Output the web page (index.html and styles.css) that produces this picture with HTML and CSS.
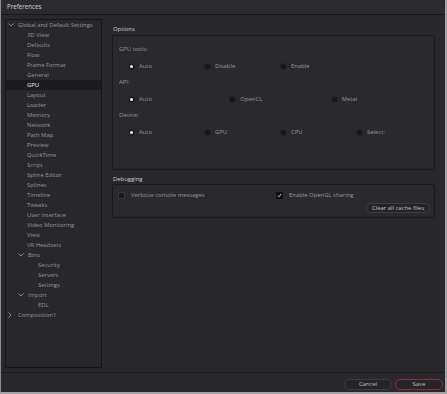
FILE: index.html
```html
<!DOCTYPE html>
<html lang="en">
<head>
    <meta charset="UTF-8">
    <title>Preferences</title>
    <link rel="stylesheet" href="styles.css">
</head>
<body>
    <div class="window">
        <div class="titlebar">Preferences</div>

        <div class="main">
            <div class="tree">
                <div class="item lvl0"><span class="arrow"><svg width="6" height="4" viewBox="0 0 6 4"><polyline points="0.5,0.5 3,3 5.5,0.5" /></svg></span>Global and Default Settings</div>
                <div class="item lvl1"><span class="arrow"></span>3D View</div>
                <div class="item lvl1"><span class="arrow"></span>Defaults</div>
                <div class="item lvl1"><span class="arrow"></span>Flow</div>
                <div class="item lvl1"><span class="arrow"></span>Frame Format</div>
                <div class="item lvl1"><span class="arrow"></span>General</div>
                <div class="item lvl1 selected"><span class="arrow"></span>GPU</div>
                <div class="item lvl1"><span class="arrow"></span>Layout</div>
                <div class="item lvl1"><span class="arrow"></span>Loader</div>
                <div class="item lvl1"><span class="arrow"></span>Memory</div>
                <div class="item lvl1"><span class="arrow"></span>Network</div>
                <div class="item lvl1"><span class="arrow"></span>Path Map</div>
                <div class="item lvl1"><span class="arrow"></span>Preview</div>
                <div class="item lvl1"><span class="arrow"></span>QuickTime</div>
                <div class="item lvl1"><span class="arrow"></span>Script</div>
                <div class="item lvl1"><span class="arrow"></span>Spline Editor</div>
                <div class="item lvl1"><span class="arrow"></span>Splines</div>
                <div class="item lvl1"><span class="arrow"></span>Timeline</div>
                <div class="item lvl1"><span class="arrow"></span>Tweaks</div>
                <div class="item lvl1"><span class="arrow"></span>User Interface</div>
                <div class="item lvl1"><span class="arrow"></span>Video Monitoring</div>
                <div class="item lvl1"><span class="arrow"></span>View</div>
                <div class="item lvl1"><span class="arrow"></span>VR Headsets</div>
                <div class="item lvl0 sub"><span class="arrow"><svg width="6" height="4" viewBox="0 0 6 4"><polyline points="0.5,0.5 3,3 5.5,0.5" /></svg></span>Bins</div>
                <div class="item lvl2"><span class="arrow"></span>Security</div>
                <div class="item lvl2"><span class="arrow"></span>Servers</div>
                <div class="item lvl2"><span class="arrow"></span>Settings</div>
                <div class="item lvl0 sub"><span class="arrow"><svg width="6" height="4" viewBox="0 0 6 4"><polyline points="0.5,0.5 3,3 5.5,0.5" /></svg></span>Import</div>
                <div class="item lvl2"><span class="arrow"></span>EDL</div>
                <div class="item lvl0"><span class="arrow"><svg width="4" height="6" viewBox="0 0 4 6"><polyline points="0.5,0.5 3,3 0.5,5.5" /></svg></span>Composition1</div>
            </div>

            <div class="content">
                <div class="section-title options-title">Options</div>
                <div class="box options">
                    <div class="group-label">GPU tools:</div>
                    <div class="radio-row cols4">
                        <label class="radio checked"><span class="dot"></span>Auto</label>
                        <label class="radio"><span class="dot"></span>Disable</label>
                        <label class="radio"><span class="dot"></span>Enable</label>
                    </div>
                    <div class="group-label">API:</div>
                    <div class="radio-row cols3">
                        <label class="radio checked"><span class="dot"></span>Auto</label>
                        <label class="radio"><span class="dot"></span>OpenCL</label>
                        <label class="radio"><span class="dot"></span>Metal</label>
                    </div>
                    <div class="group-label">Device:</div>
                    <div class="radio-row cols4">
                        <label class="radio checked"><span class="dot"></span>Auto</label>
                        <label class="radio"><span class="dot"></span>GPU</label>
                        <label class="radio"><span class="dot"></span>CPU</label>
                        <label class="radio"><span class="dot"></span>Select:</label>
                    </div>
                </div>

                <div class="section-title debug-title">Debugging</div>
                <div class="box debug">
                    <div class="check-row">
                        <label class="check"><span class="box-mark"></span>Verbose console messages</label>
                        <label class="check"><span class="box-mark on"><svg width="7" height="7" viewBox="0 0 7 7"><polyline points="1.3,3.8 2.8,5.3 5.8,1.3" /></svg></span>Enable OpenGL sharing</label>
                    </div>
                    <div class="button-row">
                        <button class="pill small">Clear all cache files</button>
                    </div>
                </div>
            </div>
        </div>

        <div class="footer">
            <button class="pill">Cancel</button>
            <button class="pill primary">Save</button>
        </div>
    </div>
</body>
</html>
```

FILE: styles.css
```css
* {
    margin: 0;
    padding: 0;
    box-sizing: border-box;
    font-family: "Open Sans", "Noto Sans", sans-serif;
}

body {
    background-color: #9a9a9c;
    width: 447px;
    height: 394px;
    overflow: hidden;
}

.window {
    width: 447px;
    height: 394px;
    background-color: #28282d;
    border-left: 1px solid #8e8e90;
    border-right: 2px solid #a4a4a6;
    border-bottom: 2px solid #a4a4a6;
    display: flex;
    flex-direction: column;
    font-size: 5.9px;
    color: #96969b;
}

.titlebar {
    height: 15px;
    line-height: 14px;
    padding-left: 6px;
    background-color: #2a2a2f;
    border-bottom: 1px solid #18181b;
    color: #d4d4d7;
    font-size: 6.2px;
}

.main {
    flex: 1;
    display: flex;
    gap: 10px;
    padding: 4px 10px 4px 4px;
}

.tree {
    width: 97px;
    background-color: #27272c;
    border: 1px solid #161619;
}

.item {
    height: 10px;
    line-height: 10px;
    display: flex;
    align-items: center;
    white-space: nowrap;
}

.item .arrow {
    width: 12px;
    height: 10px;
    display: flex;
    align-items: center;
    padding-left: 2px;
    flex-shrink: 0;
}

.arrow svg polyline {
    fill: none;
    stroke: #8e8e93;
    stroke-width: 0.9;
}

.lvl0 { padding-left: 0; }
.lvl0.sub { padding-left: 10px; }
.lvl1 { padding-left: 9px; }
.lvl2 { padding-left: 20px; }

.item.selected {
    background-color: #1c1c20;
    color: #f2f2f4;
}

.content {
    flex: 1;
    display: flex;
    flex-direction: column;
}

.section-title {
    line-height: 10px;
    color: #cfcfd3;
    padding-left: 1px;
}

.options-title {
    padding-top: 5px;
    padding-bottom: 1px;
}

.debug-title {
    padding-top: 4px;
}

.box {
    background-color: #29292e;
    border: 1px solid #1a1a1e;
    border-radius: 2px;
}

.options {
    height: 135px;
    padding: 8px 2px 0 6px;
}

.group-label {
    line-height: 10px;
    margin-bottom: 7px;
}

.radio-row {
    display: grid;
    line-height: 10px;
    margin-bottom: 6px;
    padding-left: 9px;
}

.cols4 { grid-template-columns: repeat(4, 1fr); }
.cols3 { grid-template-columns: repeat(3, 1fr); }

.radio {
    display: flex;
    align-items: center;
    gap: 4px;
}

.radio .dot {
    width: 7px;
    height: 7px;
    flex-shrink: 0;
    border-radius: 50%;
    background-color: #18181b;
    border: 1px solid #202024;
    display: flex;
    align-items: center;
    justify-content: center;
}

.radio.checked .dot::after {
    content: "";
    width: 3px;
    height: 3px;
    border-radius: 50%;
    background-color: #f4f4f4;
}

.debug {
    height: 34px;
    padding: 6px 4px 0 5px;
}

.check-row {
    display: grid;
    grid-template-columns: 158px 1fr;
    line-height: 9px;
}

.check {
    display: flex;
    align-items: center;
    gap: 6px;
}

.box-mark {
    width: 7px;
    height: 7px;
    flex-shrink: 0;
    background-color: #1c1c1f;
    border: 1px solid #36363b;
    display: flex;
    align-items: center;
    justify-content: center;
}

.box-mark.on {
    background-color: #111113;
    border-color: #111113;
}

.box-mark svg polyline {
    fill: none;
    stroke: #f4f4f4;
    stroke-width: 1.1;
}

.button-row {
    display: flex;
    justify-content: flex-end;
    margin-top: 3px;
}

.pill {
    height: 11px;
    width: 48px;
    border-radius: 6px;
    border: 1px solid #3c3c42;
    background-color: #252529;
    color: #bdbdc1;
    font-size: 5.9px;
    line-height: 9px;
}

.pill.small {
    width: 64px;
    height: 10px;
    line-height: 8px;
}

.pill.primary {
    border-color: #9b2a2e;
}

.footer {
    height: 20px;
    border-top: 1px solid #1c1c20;
    display: flex;
    justify-content: flex-end;
    gap: 3px;
    padding: 6px 2px 0 0;
}
```
